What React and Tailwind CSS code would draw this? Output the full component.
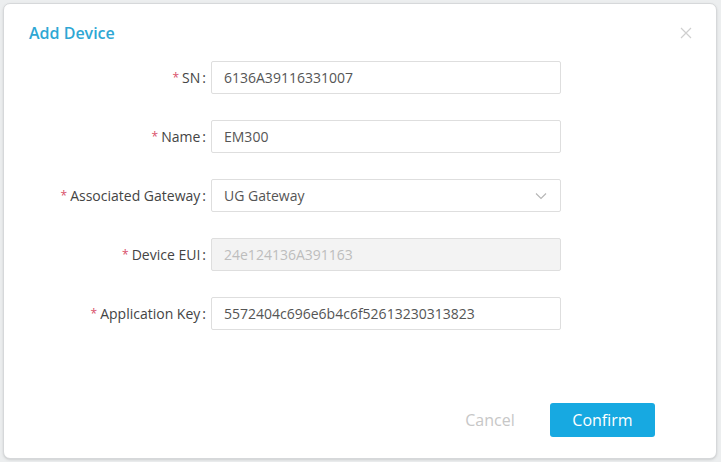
import React from 'react';

const fields = [
  { label: 'SN', value: '6136A39116331007' },
  { label: 'Name', value: 'EM300' },
  { label: 'Associated Gateway', value: 'UG Gateway', select: true },
  { label: 'Device EUI', value: '24e124136A391163', disabled: true },
  { label: 'Application Key', value: '5572404c696e6b4c6f52613230313823' },
];

const Field = ({ label, value, select, disabled }) => (
  <div className="flex items-center h-[33px]">
    <label className="w-[207px] shrink-0 flex justify-end items-center pr-[5px] text-[14px] text-[#444]">
      <span className="text-[#d9506a] text-[12px] mr-[3px]">*</span>
      {label}
      <span className="ml-[2px]">:</span>
    </label>
    <div
      className={`w-[350px] h-[33px] flex items-center justify-between px-[12px] border border-[#dedede] rounded-[2px] text-[14px] ${
        disabled ? 'bg-[#f3f3f3] text-[#bdbdbd]' : 'bg-white text-[#555]'
      }`}
    >
      <span>{value}</span>
      {select && (
        <svg width="14" height="14" viewBox="0 0 14 14" fill="none" stroke="#b5b5b5" strokeWidth="1.1">
          <path d="M2 4.5l5 5 5-5" />
        </svg>
      )}
    </div>
  </div>
);

const App = () => {
  return (
    <div
      className="w-[721px] h-[462px] bg-[#eceeef] p-[3px]"
      style={{ fontFamily: '"Open Sans", "Noto Sans", sans-serif' }}
    >
      <div className="w-[714px] h-[456px] bg-white border border-[#d6d8da] rounded-[7px] flex flex-col shadow-sm">
        <div className="flex items-center justify-between pl-[25px] pr-[24px] pt-[18px] h-[40px]">
          <h2 className="text-[16px] font-semibold text-[#2ea7d4]">Add Device</h2>
          <svg width="12" height="12" viewBox="0 0 12 12" stroke="#cfcfcf" strokeWidth="1.2">
            <path d="M1 1l10 10M11 1L1 11" />
          </svg>
        </div>
        <div className="flex flex-col gap-[26px] mt-[17px]">
          {fields.map((f) => (
            <Field key={f.label} {...f} />
          ))}
        </div>
        <div className="mt-auto mb-[21px] flex items-center justify-end pr-[61px] gap-[10px]">
          <button className="w-[100px] h-[34px] text-[16px] text-[#c7c7c7]">Cancel</button>
          <button className="w-[105px] h-[34px] rounded-[3px] bg-[#17a9e1] text-white text-[16px]">Confirm</button>
        </div>
      </div>
    </div>
  );
};

export default App;
